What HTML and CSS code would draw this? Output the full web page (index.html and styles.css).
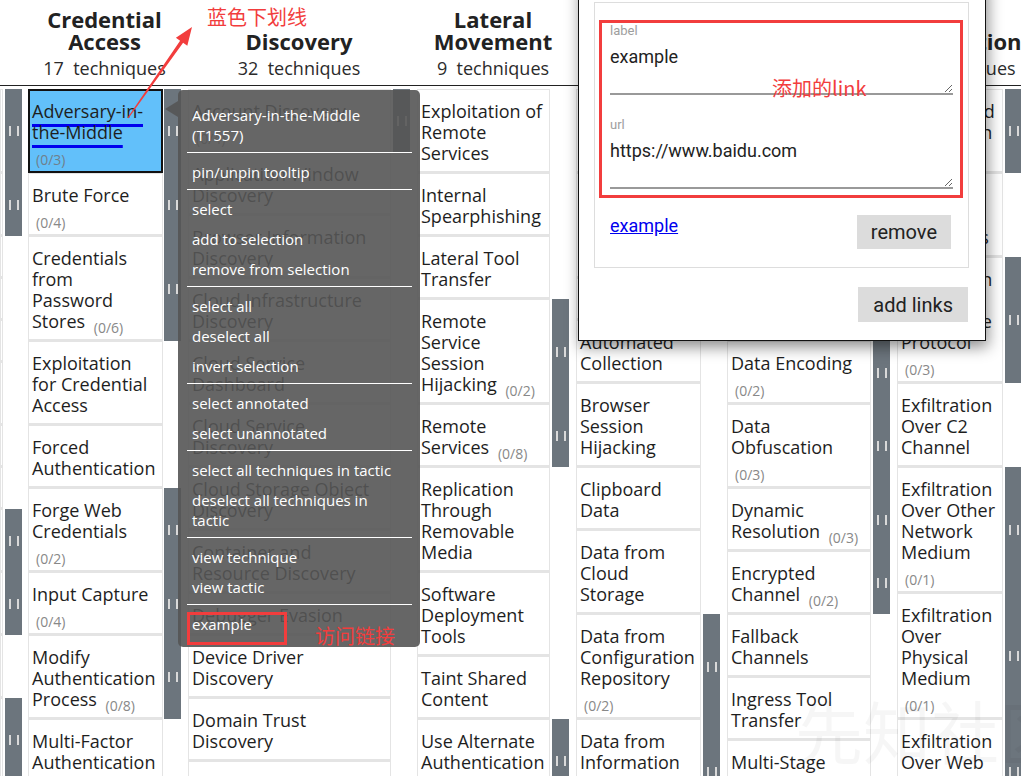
FILE: index.html
```html
<!DOCTYPE html>
<html lang="en">
<head>
<meta charset="utf-8">
<title>ATT&amp;CK Navigator</title>
<link rel="stylesheet" href="styles.css">
</head>
<body>
<div class="heads">
  <div class="head w-de"></div>
  <div class="head w-ca"><div class="tname">Credential Access</div><div class="tcount">17&nbsp; techniques</div></div>
  <div class="head w-disc"><div class="tname">Discovery</div><div class="tcount">32&nbsp; techniques</div></div>
  <div class="head w-lm"><div class="tname">Lateral Movement</div><div class="tcount">9&nbsp; techniques</div></div>
  <div class="head w-coll"><div class="tname">Collection</div><div class="tcount">17&nbsp; techniques</div></div>
  <div class="head w-c2"><div class="tname">Command and Control</div><div class="tcount">16&nbsp; techniques</div></div>
  <div class="head w-exf"><div class="tname">Exfiltration</div><div class="tcount">9&nbsp; techniques</div></div>
</div>

<div class="matrix">
  <div class="col w-de">
    <div class="tech sub"><div class="cell"><span class="nm">Abuse Elevation<br>Control Mechanism<br>(0/4)</span></div><div class="side"></div></div>
    <div class="tech sub"><div class="cell"><span class="nm">Access Token<br>Manipulation (0/5)</span></div><div class="side"></div></div>
    <div class="tech"><div class="cell"><span class="nm">BITS Jobs</span></div><div class="side"></div></div>
    <div class="tech"><div class="cell"><span class="nm">Build Image on Host</span></div><div class="side"></div></div>
    <div class="tech"><div class="cell"><span class="nm">Debugger Evasion</span></div><div class="side"></div></div>
    <div class="tech"><div class="cell"><span class="nm">Deobfuscate/Decode Files<br>or Information</span></div><div class="side"></div></div>
    <div class="tech"><div class="cell"><span class="nm">Deploy Container</span></div><div class="side"></div></div>
    <div class="tech"><div class="cell"><span class="nm">Direct Volume Access</span></div><div class="side"></div></div>
    <div class="tech sub"><div class="cell"><span class="nm">Domain Policy<br>Modification (0/2)</span></div><div class="side"></div></div>
    <div class="tech sub"><div class="cell"><span class="nm">Execution<br>Guardrails (0/1)</span></div><div class="side"></div></div>
    <div class="tech"><div class="cell"><span class="nm">Exploitation for<br>Defense Evasion</span></div><div class="side"></div></div>
    <div class="tech sub"><div class="cell"><span class="nm">File and Directory<br>Permissions<br>Modification (0/2)</span></div><div class="side"></div></div>
  </div>

  <div class="col w-ca">
    <div class="tech sub hl"><div class="cell"><span class="nm">Adversary-in-<br>the-Middle</span><br><span class="ct">(0/3)</span></div><div class="side"></div></div>
    <div class="tech sub"><div class="cell"><span class="nm">Brute Force</span><br><span class="ct">(0/4)</span></div><div class="side"></div></div>
    <div class="tech sub"><div class="cell"><span class="nm">Credentials<br>from<br>Password<br>Stores</span> <span class="ct">(0/6)</span></div><div class="side"></div></div>
    <div class="tech"><div class="cell"><span class="nm">Exploitation<br>for Credential<br>Access</span></div><div class="side"></div></div>
    <div class="tech"><div class="cell"><span class="nm">Forced<br>Authentication</span></div><div class="side"></div></div>
    <div class="tech sub"><div class="cell"><span class="nm">Forge Web<br>Credentials</span><br><span class="ct">(0/2)</span></div><div class="side"></div></div>
    <div class="tech sub"><div class="cell"><span class="nm">Input Capture</span><br><span class="ct">(0/4)</span></div><div class="side"></div></div>
    <div class="tech sub"><div class="cell"><span class="nm">Modify<br>Authentication<br>Process</span> <span class="ct">(0/8)</span></div><div class="side"></div></div>
    <div class="tech"><div class="cell"><span class="nm">Multi-Factor<br>Authentication<br>Interception</span></div><div class="side"></div></div>
  </div>

  <div class="col w-disc">
    <div class="tech sub"><div class="cell"><span class="nm">Account Discovery</span><br><span class="ct">(0/4)</span></div><div class="side"></div></div>
    <div class="tech"><div class="cell"><span class="nm">Application Window<br>Discovery</span></div><div class="side"></div></div>
    <div class="tech"><div class="cell"><span class="nm">Browser Information<br>Discovery</span></div><div class="side"></div></div>
    <div class="tech"><div class="cell"><span class="nm">Cloud Infrastructure<br>Discovery</span></div><div class="side"></div></div>
    <div class="tech"><div class="cell"><span class="nm">Cloud Service<br>Dashboard</span></div><div class="side"></div></div>
    <div class="tech"><div class="cell"><span class="nm">Cloud Service<br>Discovery</span></div><div class="side"></div></div>
    <div class="tech"><div class="cell"><span class="nm">Cloud Storage Object<br>Discovery</span></div><div class="side"></div></div>
    <div class="tech"><div class="cell"><span class="nm">Container and<br>Resource Discovery</span></div><div class="side"></div></div>
    <div class="tech"><div class="cell"><span class="nm">Debugger Evasion</span></div><div class="side"></div></div>
    <div class="tech"><div class="cell"><span class="nm">Device Driver<br>Discovery</span></div><div class="side"></div></div>
    <div class="tech"><div class="cell"><span class="nm">Domain Trust<br>Discovery</span></div><div class="side"></div></div>
    <div class="tech"><div class="cell"><span class="nm">File and Directory<br>Discovery</span></div><div class="side"></div></div>
  </div>

  <div class="col w-lm">
    <div class="tech"><div class="cell"><span class="nm">Exploitation of<br>Remote<br>Services</span></div><div class="side"></div></div>
    <div class="tech"><div class="cell"><span class="nm">Internal<br>Spearphishing</span></div><div class="side"></div></div>
    <div class="tech"><div class="cell"><span class="nm">Lateral Tool<br>Transfer</span></div><div class="side"></div></div>
    <div class="tech sub"><div class="cell"><span class="nm">Remote<br>Service<br>Session<br>Hijacking</span> <span class="ct">(0/2)</span></div><div class="side"></div></div>
    <div class="tech sub"><div class="cell"><span class="nm">Remote<br>Services</span> <span class="ct">(0/8)</span></div><div class="side"></div></div>
    <div class="tech"><div class="cell"><span class="nm">Replication<br>Through<br>Removable<br>Media</span></div><div class="side"></div></div>
    <div class="tech"><div class="cell"><span class="nm">Software<br>Deployment<br>Tools</span></div><div class="side"></div></div>
    <div class="tech"><div class="cell"><span class="nm">Taint Shared<br>Content</span></div><div class="side"></div></div>
    <div class="tech sub"><div class="cell"><span class="nm">Use Alternate<br>Authentication<br>Material</span> <span class="ct">(0/4)</span></div><div class="side"></div></div>
  </div>

  <div class="col w-coll">
    <div class="tech sub"><div class="cell"><span class="nm">Adversary-in-<br>the-Middle</span><br><span class="ct">(0/3)</span></div><div class="side"></div></div>
    <div class="tech sub"><div class="cell"><span class="nm">Archive<br>Collected<br>Data</span><br><span class="ct">(0/3)</span></div><div class="side"></div></div>
    <div class="tech"><div class="cell"><span class="nm">Audio Capture</span></div><div class="side"></div></div>
    <div class="tech"><div class="cell"><span class="nm">Automated<br>Collection</span></div><div class="side"></div></div>
    <div class="tech"><div class="cell"><span class="nm">Browser<br>Session<br>Hijacking</span></div><div class="side"></div></div>
    <div class="tech"><div class="cell"><span class="nm">Clipboard<br>Data</span></div><div class="side"></div></div>
    <div class="tech"><div class="cell"><span class="nm">Data from<br>Cloud<br>Storage</span></div><div class="side"></div></div>
    <div class="tech sub"><div class="cell"><span class="nm">Data from<br>Configuration<br>Repository</span><br><span class="ct">(0/2)</span></div><div class="side"></div></div>
    <div class="tech sub"><div class="cell"><span class="nm">Data from<br>Information<br>Repositories</span><br><span class="ct">(0/3)</span></div><div class="side"></div></div>
  </div>

  <div class="col w-c2">
    <div class="tech sub"><div class="cell"><span class="nm">Application<br>Layer Protocol</span><br><span class="ct">(0/4)</span></div><div class="side"></div></div>
    <div class="tech"><div class="cell"><span class="nm">Communication<br>Through<br>Removable<br>Media</span></div><div class="side"></div></div>
    <div class="tech"><div class="cell"><span class="nm">Content<br>Injection</span></div><div class="side"></div></div>
    <div class="tech sub"><div class="cell"><span class="nm">Data Encoding</span><br><span class="ct">(0/2)</span></div><div class="side"></div></div>
    <div class="tech sub"><div class="cell"><span class="nm">Data<br>Obfuscation</span><br><span class="ct">(0/3)</span></div><div class="side"></div></div>
    <div class="tech sub"><div class="cell"><span class="nm">Dynamic<br>Resolution</span> <span class="ct">(0/3)</span></div><div class="side"></div></div>
    <div class="tech sub"><div class="cell"><span class="nm">Encrypted<br>Channel</span> <span class="ct">(0/2)</span></div><div class="side"></div></div>
    <div class="tech"><div class="cell"><span class="nm">Fallback<br>Channels</span></div><div class="side"></div></div>
    <div class="tech"><div class="cell"><span class="nm">Ingress Tool<br>Transfer</span></div><div class="side"></div></div>
    <div class="tech"><div class="cell"><span class="nm">Multi-Stage<br>Channels</span></div><div class="side"></div></div>
  </div>

  <div class="col w-exf">
    <div class="tech sub"><div class="cell"><span class="nm">Automated<br>Exfiltration</span><br><span class="ct">(0/1)</span></div><div class="side"></div></div>
    <div class="tech"><div class="cell"><span class="nm">Data<br>Transfer<br>Size Limits</span></div><div class="side"></div></div>
    <div class="tech sub"><div class="cell"><span class="nm">Exfiltration<br>Over<br>Alternative<br>Protocol</span><br><span class="ct">(0/3)</span></div><div class="side"></div></div>
    <div class="tech"><div class="cell"><span class="nm">Exfiltration<br>Over C2<br>Channel</span></div><div class="side"></div></div>
    <div class="tech sub"><div class="cell"><span class="nm">Exfiltration<br>Over Other<br>Network<br>Medium</span><br><span class="ct">(0/1)</span></div><div class="side"></div></div>
    <div class="tech sub"><div class="cell"><span class="nm">Exfiltration<br>Over<br>Physical<br>Medium</span><br><span class="ct">(0/1)</span></div><div class="side"></div></div>
    <div class="tech sub"><div class="cell"><span class="nm">Exfiltration<br>Over Web<br>Service</span><br><span class="ct">(0/2)</span></div><div class="side"></div></div>
  </div>
</div>

<div class="watermark">先知社区</div>

<div class="menu">
  <div class="mi">Adversary-in-the-Middle<br>(T1557)</div>
  <div class="sep"></div>
  <div class="mi">pin/unpin tooltip</div>
  <div class="sep"></div>
  <div class="mi">select</div>
  <div class="mi">add to selection</div>
  <div class="mi">remove from selection</div>
  <div class="sep"></div>
  <div class="mi">select all</div>
  <div class="mi">deselect all</div>
  <div class="mi">invert selection</div>
  <div class="sep"></div>
  <div class="mi">select annotated</div>
  <div class="mi">select unannotated</div>
  <div class="sep"></div>
  <div class="mi">select all techniques in tactic</div>
  <div class="mi">deselect all techniques in<br>tactic</div>
  <div class="sep"></div>
  <div class="mi">view technique</div>
  <div class="mi">view tactic</div>
  <div class="sep"></div>
  <div class="mi">example</div>
</div>

<div class="dialog">
  <div class="card">
    <div class="fields">
      <div class="field">
        <label>label</label>
        <textarea rows="2">example</textarea>
      </div>
      <div class="field">
        <label>url</label>
        <textarea rows="2">https://www.baidu.com</textarea>
      </div>
    </div>
    <div class="link-row">
      <a class="lnk" href="#">example</a>
      <button class="btn">remove</button>
    </div>
  </div>
  <div class="add-row">
    <button class="btn btn-add">add links</button>
  </div>
</div>

<svg class="arrow" width="80" height="110" viewBox="0 0 80 110">
  <polygon points="7.5,97.7 8.5,98.3 63.1,22.7 67.3,25.7 72,7 55.9,17.7 60.1,20.7" fill="#f23d3d"/>
</svg>
<div class="note note-underline">蓝色下划线</div>
<div class="note note-link">添加的link</div>
<div class="note note-visit">访问链接</div>
<div class="mark-box"></div>
</body>
</html>
```

FILE: styles.css
```css
* { box-sizing: border-box; }
html, body { margin: 0; padding: 0; overflow: hidden; background: #fff; }
body {
  width: 1021px;
  height: 776px;
  position: relative;
  font-family: "Open Sans", "Noto Sans", sans-serif;
  color: #222;
}

/* widths shared by headers and columns */
.w-de   { width: 22px;  margin-right: 6px; flex: none; }
.w-ca   { width: 153px; margin-right: 7px; flex: none; }
.w-disc { width: 222px; margin-right: 7px; flex: none; }
.w-lm   { width: 152px; margin-right: 7px; flex: none; }
.w-coll { width: 144px; margin-right: 7px; flex: none; }
.w-c2   { width: 163px; margin-right: 7px; flex: none; }
.w-exf  { width: 125px; flex: none; }

.heads {
  display: flex;
  height: 86px;
  border-bottom: 1px solid #222;
}
.head {
  display: flex;
  flex-direction: column;
  justify-content: flex-end;
  align-items: center;
  text-align: center;
  padding-bottom: 6px;
}
.tname {
  font-size: 22px;
  line-height: 22px;
  font-weight: 700;
  color: #222;
}
.tcount {
  margin-top: 6px;
  font-size: 18px;
  line-height: 21px;
  color: #2b2b2b;
  white-space: nowrap;
}

.matrix {
  display: flex;
  align-items: flex-start;
  padding-top: 3px;
}
.col { display: flex; flex-direction: column; }

.tech {
  display: grid;
  grid-template-columns: 1fr 17px;
  column-gap: 2px;
}
.w-ca .tech { column-gap: 1px; }
.w-de .tech { grid-template-columns: 3px 17px; }

.cell {
  background: #fff;
  border: 1px solid #e4e4e4;
  border-bottom-width: 2px;
  padding: 11px 3px 7px;
  font-size: 18px;
  line-height: 21px;
  white-space: nowrap;
  color: #1e1e1e;
}
.w-de .cell { padding: 11px 0 7px; overflow: hidden; }
.w-de .nm { visibility: hidden; }

.ct {
  font-size: 14px;
  line-height: 0;
  color: #888;
  vertical-align: -5px;
  margin-left: 4px;
}

.sub .side {
  background: #6c757d;
  display: flex;
  align-items: center;
  justify-content: center;
}
.sub .side::before {
  content: "";
  width: 6px;
  height: 10px;
  border-left: 2px solid #d9d9d9;
  border-right: 2px solid #d9d9d9;
}

.hl .cell {
  background: #62c0fa;
  border: 2px solid #111;
  padding: 10px 2px 7px;
}
.hl .nm {
  text-decoration: underline 3px #0000ee;
  text-decoration-skip-ink: none;
  text-underline-offset: 6px;
}
.hl .ct { color: #6f7f8c; }

/* context menu */
.menu {
  position: absolute;
  left: 178px;
  top: 90px;
  width: 242px;
  padding: 10px 8px 8px 9px;
  background: rgba(85, 85, 85, 0.9);
  border-radius: 5px;
  color: #fff;
  font-size: 15px;
  line-height: 20px;
}
.menu::before {
  content: "";
  position: absolute;
  left: -13px;
  top: 11px;
  border-top: 8px solid transparent;
  border-bottom: 8px solid transparent;
  border-right: 13px solid rgba(85, 85, 85, 0.9);
}
.mi { padding: 5px 5px; white-space: nowrap; }
.sep { height: 1px; background: #fff; margin: 2px 0 4px; }

/* add-links dialog */
.dialog {
  position: absolute;
  left: 578px;
  top: -20px;
  width: 408px;
  background: #fff;
  border: 1px solid #111;
  padding: 21px 16px 18px 15px;
  box-shadow: 2px 6px 14px rgba(0, 0, 0, 0.45);
  font-family: Roboto, "Liberation Sans", sans-serif;
}
.card {
  border: 1px solid #ddd;
  padding: 17px 5px 18px 4px;
}
.fields {
  border: 3px solid #f23d3d;
  padding: 1px 7px 6px 8px;
}
.field + .field { margin-top: 23px; }
.field label {
  display: block;
  font-size: 13px;
  line-height: 14px;
  color: #9e9e9e;
}
.field textarea {
  display: block;
  width: 100%;
  height: 51px;
  margin: 6px 0 0;
  padding: 2px 0 0;
  border: 0;
  border-bottom: 2px solid #999;
  background: transparent;
  outline: 0;
  font-family: Roboto, "Liberation Sans", sans-serif;
  font-size: 18px;
  line-height: 21px;
  color: #222;
}
.link-row {
  display: flex;
  justify-content: space-between;
  align-items: flex-start;
  margin-top: 17px;
  padding: 0 12px 0 11px;
}
.lnk {
  font-size: 18px;
  line-height: 21px;
  color: #0000ee;
  text-decoration: underline;
}
.btn {
  height: 34px;
  padding: 0 14px;
  border: 0;
  background: #dcdcdc;
  font-family: Roboto, "Liberation Sans", sans-serif;
  font-size: 20px;
  color: #222;
}
.add-row {
  display: flex;
  justify-content: flex-end;
  margin-top: 19px;
  padding-right: 1px;
}
.btn-add { height: 35px; padding: 0 15px; }

/* annotations */
.arrow { position: absolute; left: 120px; top: 20px; }
.note {
  position: absolute;
  font-family: "Noto Sans CJK SC", "Open Sans", sans-serif;
  font-size: 20px;
  line-height: 22px;
  color: #f23d3d;
  white-space: nowrap;
}
.note-underline { left: 207px; top: 6px; }
.note-link { left: 772px; top: 77px; }
.note-visit { left: 315px; top: 625px; }
.mark-box {
  position: absolute;
  left: 187px;
  top: 612px;
  width: 100px;
  height: 33px;
  border: 3px solid #f23d3d;
}
.watermark {
  position: absolute;
  left: 795px;
  top: 690px;
  font-family: "Noto Sans CJK SC", sans-serif;
  font-size: 68px;
  line-height: 80px;
  color: rgba(0, 0, 0, 0.035);
  white-space: nowrap;
  pointer-events: none;
}
```
